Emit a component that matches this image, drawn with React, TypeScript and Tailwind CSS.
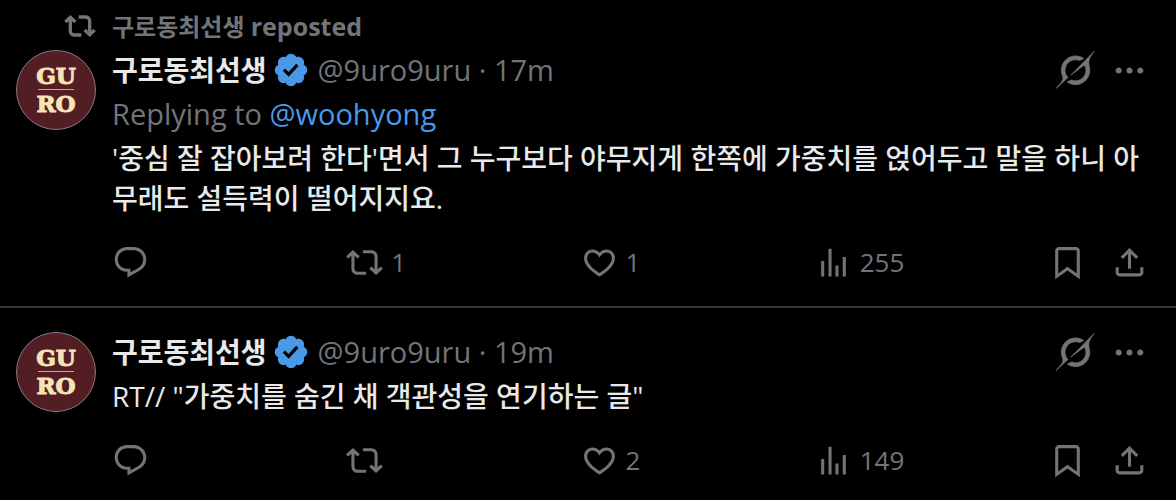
import type { ReactNode } from 'react';

const paths = {
  reply:
    'M1.751 10c0-4.42 3.584-8 8.005-8h4.366c4.49 0 8.129 3.64 8.129 8.13 0 2.96-1.607 5.68-4.196 7.11l-8.054 4.46v-3.69h-.067c-4.49.1-8.183-3.51-8.183-8.01zm8.005-6c-3.317 0-6.005 2.69-6.005 6 0 3.37 2.77 6.08 6.138 6.01l.351-.01h1.761v2.3l5.087-2.81c1.951-1.08 3.163-3.13 3.163-5.36 0-3.39-2.744-6.13-6.129-6.13H9.756z',
  repost:
    'M4.5 3.88l4.432 4.14-1.364 1.46L5.5 7.55V16c0 1.1.896 2 2 2H13v2H7.5c-2.209 0-4-1.79-4-4V7.55L1.432 9.48.068 8.02 4.5 3.88zM16.5 6H11V4h5.5c2.209 0 4 1.79 4 4v8.45l2.068-1.93 1.364 1.46-4.432 4.14-4.432-4.14 1.364-1.46 2.068 1.93V8c0-1.1-.896-2-2-2z',
  repostBold:
    'M4.75 3.79l4.603 4.3-1.706 1.82L6 8.38v7.37c0 .97.784 1.75 1.75 1.75H13V20H7.75c-2.347 0-4.25-1.9-4.25-4.25V8.38L1.853 9.91.147 8.09l4.603-4.3zm11.5 2.71H11V4h5.25c2.347 0 4.25 1.9 4.25 4.25v7.37l1.647-1.53 1.706 1.82-4.603 4.3-4.603-4.3 1.706-1.82L18 15.62V8.25c0-.97-.784-1.75-1.75-1.75z',
  like: 'M16.697 5.5c-1.222-.06-2.679.51-3.89 2.16l-.805 1.09-.806-1.09C9.984 6.01 8.526 5.44 7.304 5.5c-1.243.07-2.349.78-2.91 1.91-.552 1.12-.633 2.78.479 4.82 1.074 1.97 3.257 4.27 7.129 6.61 3.87-2.34 6.052-4.64 7.126-6.61 1.111-2.04 1.03-3.7.477-4.82-.561-1.13-1.666-1.84-2.908-1.91zm4.187 7.69c-1.351 2.48-4.001 5.12-8.379 7.67l-.503.3-.504-.3c-4.379-2.55-7.029-5.19-8.382-7.67-1.36-2.5-1.41-4.86-.514-6.67.887-1.79 2.647-2.91 4.601-3.01 1.651-.09 3.368.56 4.798 2.01 1.429-1.45 3.146-2.1 4.796-2.01 1.954.1 3.714 1.22 4.601 3.01.896 1.81.846 4.17-.514 6.67z',
  views: 'M8.75 21V3h2v18h-2zM18 21V8.5h2V21h-2zM4 21l.004-10h2L6 21H4zm9.248 0v-7h2v7h-2z',
  bookmark:
    'M4 4.5C4 3.12 5.119 2 6.5 2h11C18.881 2 20 3.12 20 4.5v18.44l-8-5.71-8 5.71V4.5zM6.5 4c-.276 0-.5.22-.5.5v14.56l6-4.29 6 4.29V4.5c0-.28-.224-.5-.5-.5h-11z',
  share:
    'M12 2.59l5.7 5.7-1.41 1.42L13 6.41V16h-2V6.41l-3.3 3.3-1.41-1.42L12 2.59zM21 15l-.02 3.51c0 1.38-1.12 2.49-2.5 2.49H5.5C4.11 21 3 19.88 3 18.5V15h2v3.5c0 .28.22.5.5.5h12.98c.28 0 .5-.22.5-.5L19 15h2z',
  more: 'M3 12c0-1.1.9-2 2-2s2 .9 2 2-.9 2-2 2-2-.9-2-2zm9 2c1.1 0 2-.9 2-2s-.9-2-2-2-2 .9-2 2 .9 2 2 2zm7 0c1.1 0 2-.9 2-2s-.9-2-2-2-2 .9-2 2 .9 2 2 2z',
  verified:
    'M20.396 11c-.018-.646-.215-1.275-.57-1.816-.354-.54-.852-.972-1.438-1.246.223-.607.27-1.264.14-1.897-.131-.634-.437-1.218-.882-1.687-.47-.445-1.053-.75-1.687-.882-.633-.13-1.29-.083-1.897.14-.273-.587-.704-1.086-1.245-1.44S11.647 1.62 11 1.604c-.646.017-1.273.213-1.813.568s-.969.854-1.24 1.44c-.608-.223-1.267-.272-1.902-.14-.635.13-1.22.436-1.69.882-.445.47-.749 1.055-.878 1.688-.13.633-.08 1.29.144 1.896-.587.274-1.087.705-1.443 1.245-.356.54-.555 1.17-.574 1.817.02.647.218 1.276.574 1.817.356.54.856.972 1.443 1.245-.224.606-.274 1.263-.144 1.896.13.634.433 1.218.877 1.688.47.443 1.054.747 1.687.878.633.132 1.29.084 1.897-.136.274.586.705 1.084 1.246 1.439.54.354 1.17.551 1.816.569.647-.016 1.276-.213 1.817-.567s.972-.854 1.245-1.44c.604.239 1.266.296 1.903.164.636-.132 1.22-.447 1.68-.907.46-.46.776-1.044.908-1.681s.075-1.299-.165-1.903c.586-.274 1.084-.705 1.439-1.246.354-.54.551-1.17.569-1.816zM9.662 14.85l-3.429-3.428 1.293-1.302 2.072 2.072 4.4-4.794 1.347 1.246z',
  grok: 'M12.745 20.54l10.97-8.19c.539-.4 1.307-.244 1.564.38 1.349 3.288.746 7.241-1.938 9.955-2.683 2.714-6.417 3.31-9.83 1.954l-3.728 1.745c5.347 3.697 11.84 2.782 15.898-1.324 3.219-3.255 4.216-7.692 3.284-11.693l.008.009c-1.351-5.878.332-8.227 3.782-13.031L33 0l-4.54 4.59v-.014L12.743 20.544m-2.263 1.987c-3.837-3.707-3.175-9.446.1-12.755 2.42-2.449 6.388-3.448 9.852-1.979l3.72-1.737c-.67-.49-1.53-1.017-2.515-1.387-4.455-1.854-9.789-.931-13.41 2.728-3.483 3.523-4.579 8.94-2.697 13.561 1.405 3.454-.899 5.898-3.22 8.364C1.49 30.2.666 31.074 0 32l10.478-9.466',
};

type IconProps = { name: keyof typeof paths; className?: string; viewBox?: string };

function Icon({ name, className = 'size-[37px]', viewBox = '0 0 24 24' }: IconProps) {
  return (
    <svg viewBox={viewBox} className={`shrink-0 fill-current ${className}`} aria-hidden="true">
      <path d={paths[name]} />
    </svg>
  );
}

function Avatar() {
  return (
    <a
      href="#profile"
      className="flex size-20 shrink-0 flex-col items-center justify-center rounded-full border border-[#8d7a7c] bg-[#521e24] pb-[2px] font-['DejaVu_Serif',serif] text-[23px] font-bold text-[#f6e3b8] [-webkit-text-stroke:1px_#f6e3b8]"
    >
      <span className="leading-[27px]">GU</span>
      <span className="h-px w-9 bg-[#c9a58c]" />
      <span className="leading-[27px]">RO</span>
    </a>
  );
}

function Action({ icon, label, count }: { icon: keyof typeof paths; label: string; count?: number }) {
  return (
    <div className="flex flex-1">
      <button type="button" aria-label={label} className="flex items-center gap-2 text-[26px] leading-[38px]">
        <Icon name={icon} />
        {count !== undefined && <span>{count}</span>}
      </button>
    </div>
  );
}

type PostProps = {
  time: string;
  replyTo?: string;
  reposts?: number;
  likes: number;
  views: number;
  children: ReactNode;
};

function Post({ time, replyTo, reposts, likes, views, children }: PostProps) {
  return (
    <div className="flex gap-4">
      <Avatar />
      <div className="flex min-w-0 flex-1 flex-col gap-1">
        <header className="flex h-10 items-center text-[28px] leading-10">
          <a href="#profile" className="font-bold text-[#e7e9ea]">
            구로동최선생
          </a>
          <Icon name="verified" viewBox="0 0 22 22" className="ml-[5px] size-[38px] text-[#4a99e9]" />
          <span className="ml-2 text-[29px]">@9uro9uru · {time}</span>
          <div className="ml-auto flex items-center gap-[17px] pr-7">
            <button type="button" aria-label="Explain this post">
              <Icon
                name="grok"
                viewBox="0 0 33 32"
                className="size-[38px] overflow-visible stroke-current stroke-[0.6]"
              />
            </button>
            <button type="button" aria-label="More">
              <Icon name="more" />
            </button>
          </div>
        </header>
        {replyTo && (
          <p className="text-[29px] leading-10">
            Replying to{' '}
            <a href="#mention" className="text-[#4a99e9]">
              {replyTo}
            </a>
          </p>
        )}
        <p className="pr-6 text-[28px] leading-10 font-medium text-[#e7e9ea]">{children}</p>
        <div className="mt-[21px] flex items-center pr-7">
          <Action icon="reply" label="Reply" />
          <Action icon="repost" label="Repost" count={reposts} />
          <Action icon="like" label="Like" count={likes} />
          <Action icon="views" label="Views" count={views} />
          <div className="flex gap-[25px]">
            <button type="button" aria-label="Bookmark">
              <Icon name="bookmark" />
            </button>
            <button type="button" aria-label="Share">
              <Icon name="share" />
            </button>
          </div>
        </div>
      </div>
    </div>
  );
}

export default function App() {
  return (
    <main className="min-h-screen bg-black font-['Open_Sans','Noto_Sans_CJK_KR',sans-serif] text-[#717579]">
      <article className="border-b-2 border-[#323437] pt-[10px] pb-[25px] pl-4">
        <div className="mb-2 flex h-8 items-center gap-4 pl-12 text-2xl leading-8 font-bold">
          <Icon name="repostBold" className="size-8" />
          <span>
            구로동최선생 <span className="text-[25px]">reposted</span>
          </span>
        </div>
        <Post time="17m" replyTo="@woohyong" reposts={1} likes={1} views={255}>
          '중심 잘 잡아보려 한다'면서 그 누구보다 야무지게 한쪽에 가중치를 얹어두고 말을 하니 아무래도 설득력이 떨어지지요.
        </Post>
      </article>
      <article className="pt-6 pl-4">
        <Post time="19m" likes={2} views={149}>
          RT// "가중치를 숨긴 채 객관성을 연기하는 글"
        </Post>
      </article>
    </main>
  );
}
